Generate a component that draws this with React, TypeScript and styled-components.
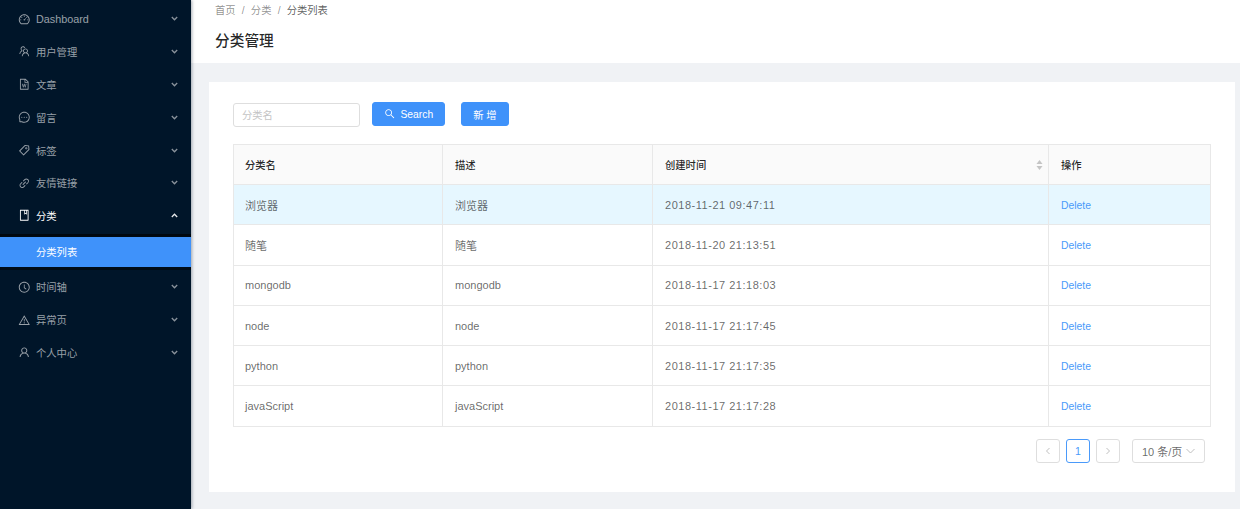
import React from 'react';
import styled, { createGlobalStyle } from 'styled-components';
import {
  AiOutlineBook,
  AiOutlineClockCircle,
  AiOutlineDashboard,
  AiOutlineFileWord,
  AiOutlineLink,
  AiOutlineMessage,
  AiOutlineSearch,
  AiOutlineTag,
  AiOutlineTeam,
  AiOutlineUser,
  AiOutlineWarning,
} from 'react-icons/ai';

const FONT = '"Liberation Sans", "Noto Sans CJK SC", sans-serif';

const GlobalStyle = createGlobalStyle`
  html, body {
    margin: 0;
    padding: 0;
    height: 509px;
    overflow: hidden;
    background: #f0f2f5;
    font-family: ${FONT};
  }
  * { box-sizing: border-box; }
`;

const Layout = styled.div`
  display: flex;
  width: 1240px;
  height: 509px;
`;

const Sider = styled.aside`
  flex: 0 0 191px;
  background: #001529;
  padding-top: 2.5px;
  box-shadow: 1px 0 3px rgba(0, 21, 41, 0.35);
  position: relative;
  z-index: 1;
`;

const MenuRow = styled.div<{ $open?: boolean }>`
  height: 32.8px;
  padding: 0 13px 0 17.5px;
  display: flex;
  align-items: center;
  color: ${(p) => (p.$open ? '#fff' : 'rgba(255, 255, 255, 0.6)')};
  svg.menu-icon {
    font-size: 12.5px;
    margin-right: 6px;
    flex: none;
  }
`;

const MenuLabel = styled.span<{ $latin?: boolean }>`
  flex: 1;
  font-size: ${(p) => (p.$latin ? '10.8px' : '10.3px')};
`;

const Arrow = styled.svg`
  width: 7px;
  height: 5px;
  fill: none;
  stroke: currentColor;
  stroke-width: 1.3;
  opacity: 0.9;
`;

const SubMenu = styled.div`
  background: #000c17;
  margin: 2px 0 0.5px;
  padding: 3px 0;
  box-shadow: inset 0 2px 3px rgba(0, 0, 0, 0.45);
`;

const SubItem = styled.div`
  height: 30px;
  background: #3f92fa;
  color: #fff;
  font-size: 10.3px;
  padding: 0 0 1px 36px;
  display: flex;
  align-items: center;
`;

const Main = styled.main`
  flex: 1;
  min-width: 0;
  display: flex;
  flex-direction: column;
`;

const PageHeader = styled.header`
  height: 63px;
  background: #fff;
  padding: 4px 24px 0;
`;

const Crumbs = styled.div`
  display: flex;
  gap: 6.2px;
  font-size: 10.3px;
  line-height: 13px;
  color: rgba(0, 0, 0, 0.45);
`;

const CrumbLast = styled.span`
  color: rgba(0, 0, 0, 0.65);
`;

const Title = styled.h1`
  margin: 14px 0 0;
  font-size: 14.7px;
  line-height: 20px;
  font-weight: 500;
  color: rgba(0, 0, 0, 0.85);
`;

const Content = styled.div`
  flex: 1;
  padding: 19px 5px 17px 18px;
`;

const Card = styled.section`
  height: 100%;
  background: #fff;
  padding: 20px 24px 0;
`;

const Toolbar = styled.div`
  display: flex;
  align-items: flex-start;
  height: 42px;
`;

const SearchInput = styled.input`
  width: 127px;
  height: 24px;
  margin-top: 1px;
  margin-right: 12px;
  padding: 0 8px;
  border: 1px solid #dedede;
  border-radius: 3px;
  background: #fff;
  font-family: ${FONT};
  font-size: 10.3px;
  outline: none;
  &::placeholder {
    color: #c4c4c4;
  }
`;

const Button = styled.button<{ $gap?: number }>`
  height: 24px;
  margin-right: ${(p) => p.$gap ?? 0}px;
  padding: 0 11px;
  display: flex;
  align-items: center;
  gap: 5px;
  border: 1px solid #3f92fa;
  border-radius: 3px;
  background: #3f92fa;
  color: #fff;
  font-family: ${FONT};
  font-size: 10.3px;
  svg {
    font-size: 11.5px;
  }
`;

const Table = styled.table`
  width: 977px;
  table-layout: fixed;
  border-collapse: collapse;
  font-size: 10.3px;
  color: rgba(0, 0, 0, 0.6);
`;

const HeadCell = styled.th`
  height: 40px;
  padding: 0 12px;
  text-align: left;
  font-weight: 500;
  color: rgba(0, 0, 0, 0.85);
  background: #fafafa;
  border: 1px solid #e8e8e8;
  &:first-child {
    padding-left: 11px;
  }
`;

const HeadInner = styled.div`
  display: flex;
  justify-content: space-between;
  align-items: center;
`;

const Sorter = styled.svg`
  width: 7px;
  height: 10px;
  margin-right: -7px;
  fill: #c4c4c4;
`;

const Row = styled.tr<{ $active?: boolean }>`
  background: ${(p) => (p.$active ? '#e6f7ff' : '#fff')};
`;

const Cell = styled.td<{ $date?: boolean }>`
  height: 40.3px;
  padding: 0 12px;
  border: 1px solid #e8e8e8;
  font-size: 11px;
  letter-spacing: ${(p) => (p.$date ? '0.52px' : '0')};
  &:first-child {
    padding-left: 11px;
  }
`;

const DeleteLink = styled.a`
  font-size: 10.4px;
  color: #4a9afa;
`;

const Pager = styled.nav`
  display: flex;
  justify-content: flex-end;
  align-items: center;
  margin-top: 12px;
  padding-right: 6px;
`;

const PageBox = styled.span<{ $current?: boolean; $gap?: number }>`
  width: 24px;
  height: 24px;
  margin-right: ${(p) => p.$gap ?? 6}px;
  display: flex;
  align-items: center;
  justify-content: center;
  border: 1px solid ${(p) => (p.$current ? '#4a9afa' : '#dedede')};
  border-radius: 3px;
  color: ${(p) => (p.$current ? '#4a9afa' : 'rgba(0, 0, 0, 0.25)')};
  font-size: 10.6px;
`;

const PageSize = styled.div`
  width: 73px;
  height: 24px;
  padding: 0 9px;
  display: flex;
  align-items: center;
  justify-content: space-between;
  border: 1px solid #dedede;
  border-radius: 3px;
  font-size: 11px;
  color: rgba(0, 0, 0, 0.6);
`;

const SmallChevron = styled.svg`
  width: 8px;
  height: 8px;
  fill: none;
  stroke: currentColor;
  stroke-width: 1;
`;

const SizeChevron = styled(SmallChevron)`
  color: #bfbfbf;
  width: 9px;
`;

const menu = [
  { label: 'Dashboard', icon: AiOutlineDashboard, latin: true },
  { label: '用户管理', icon: AiOutlineTeam },
  { label: '文章', icon: AiOutlineFileWord },
  { label: '留言', icon: AiOutlineMessage },
  { label: '标签', icon: AiOutlineTag },
  { label: '友情链接', icon: AiOutlineLink },
  { label: '分类', icon: AiOutlineBook, open: true },
  { label: '时间轴', icon: AiOutlineClockCircle },
  { label: '异常页', icon: AiOutlineWarning },
  { label: '个人中心', icon: AiOutlineUser },
];

const rows = [
  { name: '浏览器', time: '2018-11-21 09:47:11', active: true },
  { name: '随笔', time: '2018-11-20 21:13:51' },
  { name: 'mongodb', time: '2018-11-17 21:18:03' },
  { name: 'node', time: '2018-11-17 21:17:45' },
  { name: 'python', time: '2018-11-17 21:17:35' },
  { name: 'javaScript', time: '2018-11-17 21:17:28' },
];

const App: React.FC = () => {
  return (
    <>
      <GlobalStyle />
      <Layout>
        <Sider>
          {menu.map((item) => (
            <React.Fragment key={item.label}>
              <MenuRow $open={item.open}>
                <item.icon className="menu-icon" />
                <MenuLabel $latin={item.latin}>{item.label}</MenuLabel>
                <Arrow viewBox="0 0 7 5">
                  <path d={item.open ? 'M.8 4 3.5 1.2 6.2 4' : 'M.8 1 3.5 3.8 6.2 1'} />
                </Arrow>
              </MenuRow>
              {item.open && (
                <SubMenu>
                  <SubItem>分类列表</SubItem>
                </SubMenu>
              )}
            </React.Fragment>
          ))}
        </Sider>
        <Main>
          <PageHeader>
            <Crumbs>
              <span>首页</span>
              <span>/</span>
              <span>分类</span>
              <span>/</span>
              <CrumbLast>分类列表</CrumbLast>
            </Crumbs>
            <Title>分类管理</Title>
          </PageHeader>
          <Content>
            <Card>
              <Toolbar>
                <SearchInput placeholder="分类名" />
                <Button $gap={16}>
                  <AiOutlineSearch />
                  Search
                </Button>
                <Button>新 增</Button>
              </Toolbar>
              <Table>
                <colgroup>
                  <col width={209} />
                  <col width={210} />
                  <col width={396} />
                  <col width={162} />
                </colgroup>
                <thead>
                  <tr>
                    <HeadCell>分类名</HeadCell>
                    <HeadCell>描述</HeadCell>
                    <HeadCell>
                      <HeadInner>
                        创建时间
                        <Sorter viewBox="0 0 7 10">
                          <path d="M3.5 0 6.500 4H.5zM3.500 10 .5 6h6z" />
                        </Sorter>
                      </HeadInner>
                    </HeadCell>
                    <HeadCell>操作</HeadCell>
                  </tr>
                </thead>
                <tbody>
                  {rows.map((row) => (
                    <Row key={row.time} $active={row.active}>
                      <Cell>{row.name}</Cell>
                      <Cell>{row.name}</Cell>
                      <Cell $date>{row.time}</Cell>
                      <Cell>
                        <DeleteLink>Delete</DeleteLink>
                      </Cell>
                    </Row>
                  ))}
                </tbody>
              </Table>
              <Pager>
                <PageBox>
                  <SmallChevron viewBox="0 0 8 8">
                    <path d="M5.5 1 2.5 4 5.500 7" />
                  </SmallChevron>
                </PageBox>
                <PageBox $current>1</PageBox>
                <PageBox $gap={12}>
                  <SmallChevron viewBox="0 0 8 8">
                    <path d="M2.5 1 5.500 4 2.500 7" />
                  </SmallChevron>
                </PageBox>
                <PageSize>
                  10 条/页
                  <SizeChevron viewBox="0 0 9 8">
                    <path d="M.5 2 4.500 6 8.500 2" />
                  </SizeChevron>
                </PageSize>
              </Pager>
            </Card>
          </Content>
        </Main>
      </Layout>
    </>
  );
};

export default App;
